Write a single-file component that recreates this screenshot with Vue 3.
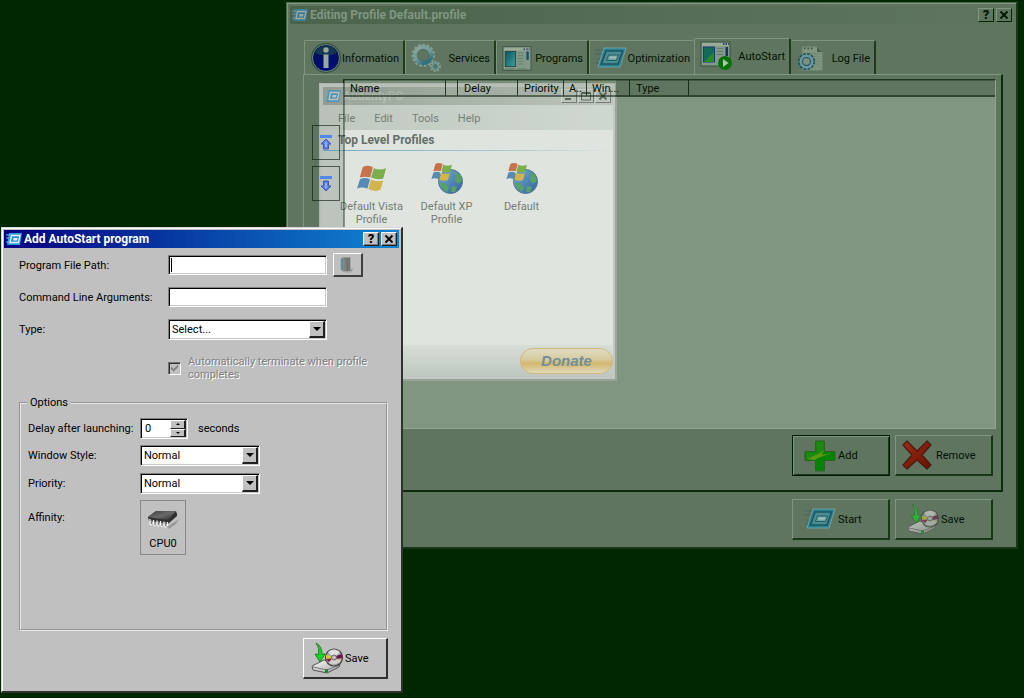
<script setup>
import { ref } from 'vue'

const tabs = [
  { name: 'Information', icon: 'info', cls: 'w-info' },
  { name: 'Services', icon: 'gears', cls: 'w-services' },
  { name: 'Programs', icon: 'program', cls: 'w-programs' },
  { name: 'Optimization', icon: 'speed', cls: 'w-optim' },
  { name: 'AutoStart', icon: 'autostart', cls: 'w-auto' },
  { name: 'Log File', icon: 'log', cls: 'w-log' },
]
const activeTab = ref('AutoStart')

const columns = [
  { title: 'Name', cls: 'c-name' },
  { title: '', cls: 'c-blank' },
  { title: 'Delay', cls: 'c-delay' },
  { title: 'Priority', cls: 'c-priority' },
  { title: 'A..', cls: 'c-aff' },
  { title: 'Win...', cls: 'c-win' },
  { title: 'Type', cls: 'c-type' },
  { title: '', cls: 'c-rest' },
]

const profiles = [
  { name: 'Default Vista Profile', icon: 'flag' },
  { name: 'Default XP Profile', icon: 'globe' },
  { name: 'Default', icon: 'globe' },
]

const path = ref('')
const args = ref('')
const type = ref('Select...')
const delay = ref(0)
const windowStyle = ref('Normal')
const priority = ref('Normal')
</script>

<template>
  <main class="desktop">
    <svg class="defs" aria-hidden="true">
      <defs>
        <linearGradient id="gTeal" x1="0" y1="0" x2="1" y2="1">
          <stop offset="0" stop-color="#0a5560" /><stop offset="1" stop-color="#3fa09a" />
        </linearGradient>
        <radialGradient id="gInfo" cx=".5" cy=".8" r=".8">
          <stop offset="0" stop-color="#000b80" /><stop offset="1" stop-color="#02104f" />
        </radialGradient>
        <linearGradient id="gGear" x1="0" y1="0" x2=".6" y2="1">
          <stop offset="0" stop-color="#8ba59a" /><stop offset=".6" stop-color="#6f9a98" /><stop offset="1" stop-color="#2f7080" />
        </linearGradient>
        <linearGradient id="gRed" x1="0" y1="0" x2="1" y2="1">
          <stop offset="0" stop-color="#a02c18" /><stop offset="1" stop-color="#651000" />
        </linearGradient>
        <linearGradient id="gDrive" x1="0" y1="0" x2="1" y2="1">
          <stop offset="0" stop-color="#ffffff" /><stop offset="1" stop-color="#9a9a9a" />
        </linearGradient>
        <linearGradient id="gGlobe" x1="0" y1="0" x2="1" y2="1">
          <stop offset="0" stop-color="#70b8f0" /><stop offset="1" stop-color="#1850a8" />
        </linearGradient>
        <linearGradient id="gChip" x1="0" y1="0" x2="1" y2="1">
          <stop offset="0" stop-color="#3c3c3c" /><stop offset=".5" stop-color="#6a6a6a" /><stop offset="1" stop-color="#2a2a2a" />
        </linearGradient>
      </defs>

      <symbol id="logo" viewBox="0 0 16 12">
        <path d="M3 0H16L14 12H1Z" fill="#2d9be0" />
        <path d="M0 2H4M0 5H3M0 9H3" stroke="#7cc8f4" stroke-width="1" />
        <path d="M5.500 2.500H14L12.500 9.500H4Z" fill="#2b8fd6" stroke="#e8f6ff" stroke-width="1.300" />
        <path d="M7.500 5H11.500L11 7.500H7Z" fill="#d8efff" />
      </symbol>

      <symbol id="info" viewBox="0 0 32 32">
        <circle cx="16" cy="16" r="15" fill="#35533c" />
        <circle cx="16" cy="16" r="13.500" fill="url(#gInfo)" stroke="#6b8a78" stroke-width="1" />
        <path d="M5 11A12 12 0 0 1 27 11Q16 16 5 11Z" fill="#24524f" opacity=".6" />
        <circle cx="16" cy="8" r="2.700" fill="#9aaa9a" />
        <path d="M13.500 12.500H18.500V26H13.500Z" fill="#9aaa9a" />
      </symbol>

      <symbol id="gears" viewBox="0 0 32 32">
        <circle cx="13" cy="13" r="11" fill="none" stroke="#7f9f96" stroke-width="3" stroke-dasharray="2.800 1.800" />
        <circle cx="13" cy="13" r="8.500" fill="none" stroke="url(#gGear)" stroke-width="4.500" />
        <circle cx="13" cy="13" r="6.200" fill="none" stroke="#3c6058" stroke-width=".7" />
        <circle cx="26" cy="25" r="4.800" fill="none" stroke="#87a49a" stroke-width="2" stroke-dasharray="2 1.500" />
        <circle cx="26" cy="25" r="3.200" fill="none" stroke="#6f9490" stroke-width="2.500" />
        <circle cx="26" cy="25" r="2" fill="none" stroke="#3c6058" stroke-width=".6" />
      </symbol>

      <symbol id="program" viewBox="0 0 32 32">
        <rect x="1" y="4" width="30" height="25" fill="#83998a" stroke="#39533f" />
        <rect x="2" y="5" width="28" height="3" fill="#98aa98" />
        <path d="M23 6.500h1.500M26 6.500h1.500M28.500 6.500h1" stroke="#14205a" stroke-width="1.500" />
        <rect x="3.500" y="9" width="11" height="16" fill="url(#gTeal)" stroke="#25493f" />
        <path d="M17 10.500h6M17 13.500h6M17 16.500h6M17 19.500h6M17 22.500h6M4 27.500h9M17 27.500h9" stroke="#667d6a" />
        <rect x="26" y="9" width="2.500" height="9" fill="#124e70" />
      </symbol>

      <symbol id="autostart" viewBox="0 0 32 32">
        <rect x="1" y="2" width="29" height="24" fill="#83998a" stroke="#39533f" />
        <rect x="2" y="3" width="27" height="3" fill="#98aa98" />
        <path d="M23 4h1.500M25.500 4h1.500M28 4h1" stroke="#14205a" stroke-width="1.500" />
        <rect x="3.500" y="7" width="11" height="15" fill="#146a58" stroke="#1c3c70" />
        <path d="M4 22L14 12V22Z" fill="#2a8a28" />
        <path d="M17 8.500h6M17 11.500h6M17 14.500h6" stroke="#667d6a" />
        <rect x="25.500" y="7" width="2.500" height="9" fill="#16306a" />
        <circle cx="25" cy="23" r="7" fill="#087008" />
        <path d="M23 19L28.500 23L23 27Z" fill="#b0c8a8" />
      </symbol>

      <symbol id="speed" viewBox="0 0 32 24">
        <path d="M1 4H9M0 8H8M2 13H7M1 17H6" stroke="#3f6668" stroke-width="1.200" />
        <path d="M9 2H31L25 21H3Z" fill="#2a8090" stroke="#6fa2a0" stroke-width="1" />
        <path d="M11 5H27.500L23 18H6.500Z" fill="#4b8c90" stroke="#1b5664" stroke-width="1.600" />
        <path d="M13.500 9H23.500L21.500 14.500H11.500Z" fill="#6fa09c" stroke="#1f5f6c" />
        <path d="M15 10.500H21.500L21 12.500H14.500Z" fill="#a5bfb4" />
      </symbol>

      <symbol id="log" viewBox="0 0 32 32">
        <path d="M7 3H24L30 9V30H7Z" fill="#809680" stroke="#70866f" />
        <path d="M24 3L30 9H24Z" fill="#486048" />
        <path d="M9 5h2M13 5h2M17 5h2" stroke="#405a44" stroke-width="2" />
        <path d="M10 11H28M10 14H28M10 17H28M10 20H28M10 23H28M10 26H28" stroke="#6d866f" />
        <circle cx="12" cy="20" r="8.500" fill="none" stroke="#1c505a" stroke-width="2.500" stroke-dasharray="3 1.500" />
        <circle cx="12" cy="20" r="6.500" fill="none" stroke="#6898a0" stroke-width="3" />
        <circle cx="12" cy="20" r="4.500" fill="none" stroke="#204868" stroke-width="1.200" />
      </symbol>

      <symbol id="plus" viewBox="0 0 32 32">
        <path d="M11.500 1H20.500V11.500H31V20.500H20.500V31H11.500V20.500H1V11.500H11.500Z" fill="#078407" stroke="#2a6420" />
        <path d="M2 12.500H12.500V2H19.500V11L15 17L2 19.500Z" fill="#2a9018" opacity=".55" />
        <path d="M3 19L16 13L20 10L18 15L28 13L14 18L11 20Z" fill="#5b9a10" />
      </symbol>

      <symbol id="cross" viewBox="0 0 32 32">
        <path d="M6 2L16 12L26 2L30 6L21 16L30 26L26 30L16 21L6 30L2 26L11 16L2 6Z" fill="url(#gRed)" stroke="#471c10" stroke-width="1.200" stroke-linejoin="round" />
      </symbol>

      <symbol id="drive" viewBox="0 0 32 32">
        <path d="M1 24L13 18L29 22L28 25L16 31L2 28Z" fill="url(#gDrive)" stroke="#555" />
        <path d="M2 25L16 28L28 23" fill="none" stroke="#777" />
        <path d="M14 28L17 27V30L14 31Z" fill="#0a8a20" />
        <ellipse cx="23" cy="15.500" rx="8.500" ry="8.500" fill="#a8a8a8" stroke="#444" stroke-width="1.200" />
        <path d="M17 10Q23 5 29 10L25 14H21Z" fill="#e0e0e0" />
        <path d="M15 13L21 14.500V17L15 16.500Z" fill="#d8c828" />
        <path d="M15 17L21 16.500L18 20Z" fill="#901040" />
        <path d="M25 14L31 12V16L25 17Z" fill="#701048" />
        <path d="M25 17L30 18L28 21Z" fill="#e8d090" />
        <path d="M18 21Q23 24 29 20L25 17H21Z" fill="#d0d0d0" />
        <circle cx="23" cy="15.500" r="2.500" fill="#c0c0c0" stroke="#666" />
        <path d="M5 1Q11 4 11 12L14 12L9 20L4 12L7.500 12.500Q9 6 5 1Z" fill="#10d820" stroke="#187018" stroke-width=".8" />
      </symbol>

      <symbol id="flagmark" viewBox="0 0 32 30">
        <path d="M6 3Q11 0 17 3L14 14Q8 12 3 14Z" fill="#e0663a" />
        <path d="M18 4Q24 7 31 4L28 15Q22 17 15 14Z" fill="#78b83a" />
        <path d="M3 16Q8 13 14 16L11 26Q5 23 0 26Z" fill="#4a88c8" />
        <path d="M15 16Q21 19 28 17L25 27Q18 30 12 26Z" fill="#ecc038" />
      </symbol>
      <symbol id="flag" viewBox="0 0 32 32">
        <use href="#flagmark" x="1" y="2" width="30" height="29" />
      </symbol>
      <symbol id="globe" viewBox="0 0 32 32">
        <circle cx="19.500" cy="19.500" r="12" fill="url(#gGlobe)" stroke="#456a9a" />
        <path d="M23 9L29 13L31 19L27 22L24 18L25 14ZM9 20L15 22L18 26L16 30L11 26ZM21 24L26 25L24 30L20 30Z" fill="#48a858" />
        <use href="#flagmark" x="0" y="0" width="22" height="20" />
      </symbol>

      <symbol id="chip" viewBox="0 0 32 20">
        <path d="M20 17L32 9L29 14L22 19Z" fill="#999" />
        <path d="M1 7L9 1H29L30 4V6L21 14L2 11Z" fill="#303030" />
        <path d="M1 7L9 1H29L21 10Z" fill="url(#gChip)" />
        <path d="M3 9v5l2 1M6.500 10v4l2 2M10 10.500v4l2 2M13.500 11v4l2 2M17 11.500v4l2 2M20.500 12v4" fill="none" stroke="#f0f0f0" stroke-width="1.300" />
        <path d="M4.500 10v4M8 11v4M11.500 11v4M15 12v4M18.500 12v4" stroke="#777" stroke-width="1" />
      </symbol>

      <symbol id="book" viewBox="0 0 16 16">
        <path d="M9 13L15 11L12 16H5Z" fill="#a4a4a4" />
        <path d="M1 1L4 0V15L1 13Z" fill="#5a8f94" stroke="#8a9aa8" stroke-width=".6" />
        <path d="M4 0H11V14L4 15Z" fill="#707070" />
        <path d="M5 1H6V14H5ZM9 1V13" fill="#939393" stroke="#858585" stroke-width=".6" />
      </symbol>

      <symbol id="up" viewBox="0 0 14 16">
        <path d="M1 1.500H13" stroke="#4080f0" stroke-width="3" />
        <path d="M7 4L12 9H9.500V14H4.500V9H2Z" fill="#4c6ee8" stroke="#2a48c0" />
        <path d="M7 6L9 8.500H8V12H6V8.500H5Z" fill="#86acf8" />
      </symbol>
      <symbol id="down" viewBox="0 0 14 16">
        <path d="M1 1.500H13" stroke="#4080f0" stroke-width="3" />
        <path d="M7 15L12 10H9.500V5H4.500V10H2Z" fill="#4c6ee8" stroke="#2a48c0" />
        <path d="M7 13L9 10.500H8V7H6V10.500H5Z" fill="#86acf8" />
      </symbol>

      <symbol id="close" viewBox="0 0 12 10">
        <path d="M2.500 1.500L9.500 8.500M9.500 1.500L2.500 8.500" stroke="currentColor" stroke-width="1.800" />
      </symbol>
      <symbol id="min" viewBox="0 0 12 10"><path d="M2 8H8" stroke="currentColor" stroke-width="2" /></symbol>
      <symbol id="max" viewBox="0 0 12 10"><path d="M1.500 1.500H10.500V9H1.500ZM1.500 2.500H10.500" fill="none" stroke="currentColor" /></symbol>
    </svg>

    <!-- Profile editor -->
    <section class="editor">
      <header class="titlebar">
        <svg class="logo"><use href="#logo" /></svg>
        <h1>Editing Profile Default.profile</h1>
        <button class="cap" aria-label="Help">?</button>
        <button class="cap" aria-label="Close"><svg><use href="#close" /></svg></button>
      </header>
      <nav class="tabs" role="tablist">
        <button
          v-for="t in tabs" :key="t.name" role="tab"
          :class="['tab', t.cls, { active: t.name === activeTab }]"
          :aria-selected="t.name === activeTab" @click="activeTab = t.name"
        >
          <svg><use :href="'#' + t.icon" /></svg><span>{{ t.name }}</span>
        </button>
      </nav>
      <div class="page">
        <div class="listrow">
          <div class="movers">
            <button aria-label="Move up"><svg><use href="#up" /></svg></button>
            <button aria-label="Move down"><svg><use href="#down" /></svg></button>
          </div>
          <div class="list">
            <table>
              <thead>
                <tr><th v-for="c in columns" :key="c.cls" :class="c.cls">{{ c.title }}</th></tr>
              </thead>
            </table>
          </div>
        </div>
        <div class="actions">
          <button class="big default"><svg class="ic"><use href="#plus" /></svg>Add</button>
          <button class="big remove"><svg class="ic"><use href="#cross" /></svg>Remove</button>
        </div>
      </div>
      <footer class="actions foot">
        <button class="big"><svg class="ic"><use href="#speed" /></svg>Start</button>
        <button class="big"><svg class="ic dim"><use href="#drive" /></svg>Save</button>
      </footer>
    </section>

    <!-- Main window, fading out -->
    <section class="ghost">
      <header class="titlebar">
        <svg class="logo"><use href="#logo" /></svg>
        <h1>AudentyPC</h1>
        <button class="cap" aria-label="Minimize"><svg><use href="#min" /></svg></button>
        <button class="cap" aria-label="Maximize"><svg><use href="#max" /></svg></button>
        <button class="cap" aria-label="Close main window"><svg><use href="#close" /></svg></button>
      </header>
      <nav class="menu">
        <button>File</button><button>Edit</button><button>Tools</button><button>Help</button>
      </nav>
      <div class="sheet">
        <h2>Top Level Profiles</h2>
        <ul>
          <li v-for="p in profiles" :key="p.name">
            <svg><use :href="'#' + p.icon" /></svg><span>{{ p.name }}</span>
          </li>
        </ul>
      </div>
      <footer><button class="donate">Donate</button></footer>
    </section>

    <!-- Add program dialog -->
    <section class="dialog" role="dialog" aria-labelledby="dlg-title">
      <header class="titlebar">
        <svg class="logo"><use href="#logo" /></svg>
        <h1 id="dlg-title">Add AutoStart program</h1>
        <button class="cap" aria-label="Dialog help">?</button>
        <button class="cap" aria-label="Close dialog"><svg><use href="#close" /></svg></button>
      </header>
      <form @submit.prevent>
        <div class="field">
          <label for="path">Program File Path:</label>
          <span class="caretbox"><input id="path" v-model="path" class="box" type="text"><i class="caret"></i></span>
          <button type="button" class="browse" aria-label="Browse"><svg><use href="#book" /></svg></button>
        </div>
        <div class="field">
          <label for="args">Command Line Arguments:</label>
          <input id="args" v-model="args" class="box" type="text">
        </div>
        <div class="field">
          <label for="type">Type:</label>
          <span class="combo wide">
            <select id="type" v-model="type"><option>Select...</option></select><i class="arrow"></i>
          </span>
        </div>
        <div class="check">
          <input id="term" type="checkbox" checked disabled>
          <label for="term">Automatically terminate when profile completes</label>
        </div>
        <fieldset>
          <legend>Options</legend>
          <div class="opt">
            <label for="delay">Delay after launching:</label>
            <span class="spin">
              <input id="delay" v-model.number="delay" type="text">
              <span class="steps">
                <button type="button" aria-label="Increase" @click="delay++"><i class="tri-up"></i></button>
                <button type="button" aria-label="Decrease" @click="delay--"><i class="tri-down"></i></button>
              </span>
            </span>
            <span class="unit">seconds</span>
          </div>
          <div class="opt">
            <label for="wstyle">Window Style:</label>
            <span class="combo"><select id="wstyle" v-model="windowStyle"><option>Normal</option></select><i class="arrow"></i></span>
          </div>
          <div class="opt">
            <label for="prio">Priority:</label>
            <span class="combo"><select id="prio" v-model="priority"><option>Normal</option></select><i class="arrow"></i></span>
          </div>
          <div class="opt affinity">
            <span id="aff" class="lbl">Affinity:</span>
            <button type="button" class="cpu" aria-describedby="aff"><svg><use href="#chip" /></svg>CPU0</button>
          </div>
        </fieldset>
        <div class="save">
          <button type="submit" class="big light"><svg class="ic"><use href="#drive" /></svg>Save</button>
        </div>
      </form>
    </section>
  </main>
</template>

<style>
body { background: #002800; }
</style>

<style scoped>
* { box-sizing: border-box; }
.desktop {
  position: relative;
  min-height: 100vh;
  overflow: hidden;
  background: #002800;
  font: 11px/13px Roboto, "Liberation Sans", Arial, sans-serif;
  color: #000;
}
.defs { position: absolute; width: 0; height: 0; }
button, input, select { font: inherit; color: inherit; margin: 0; padding: 0; border-radius: 0; outline: 0; }
h1, h2, ul { margin: 0; padding: 0; }
svg { display: block; flex: none; }

.titlebar { display: flex; align-items: center; height: 18px; padding: 0 2px; }
.titlebar h1 { flex: 1; margin-left: 2px; font-size: 12px; line-height: 18px; font-weight: bold; white-space: nowrap; }
.logo { width: 16px; height: 12px; }
.cap {
  width: 16px; height: 14px; border: 1px solid; margin-left: 2px;
  display: flex; align-items: center; justify-content: center;
  font-size: 13px; line-height: 12px; font-weight: 900;
}
.cap svg { width: 12px; height: 10px; }

/* editor */
.editor {
  position: absolute; left: 286px; right: 6px; top: 2px;
  background: #607560; color: #001200;
  border: 1px solid #506850; border-right: 2px solid #183818; border-bottom: 2px solid #183818;
  box-shadow: inset 1px 1px #809880;
  padding: 3px 2px 7px 3px;
}
.editor .titlebar { background: linear-gradient(90deg, #4b634b, #5f755f); color: #809680; }
.editor .logo { opacity: .5; }
.cap { background: #607560; border-color: #809880 #002800 #002800 #809880; color: #001800; }
.tabs { display: flex; align-items: flex-end; height: 36px; margin: 14px 0 0 14px; }
.tab {
  display: flex; align-items: center; justify-content: space-between;
  height: 34px; padding: 1px 4px 0 5px; background: #607560;
  border: 1px solid #7e967e; border-right: 2px solid #1c3c1c; border-bottom: 0;
  border-radius: 2px 2px 0 0; white-space: nowrap;
}
.tab svg { width: 32px; height: 32px; }
.tab.active { height: 36px; position: relative; padding-bottom: 2px; }
.w-info { width: 101px; }
.w-services { width: 91px; }
.w-programs { width: 93px; }
.w-optim { width: 105px; border-right-width: 0; }
.w-auto { width: 97px; }
.w-log { width: 85px; border-left: 0; }
.w-services svg, .w-programs svg { width: 30px; height: 30px; }
.w-log svg { width: 28px; height: 28px; }
.page {
  margin: 0 11px 0 13px; padding: 4px 5px 14px 8px;
  border: 1px solid #7e967e; border-right: 2px solid #0c2c0c; border-bottom: 2px solid #0c2c0c;
}
.listrow { display: flex; gap: 3px; }
.movers { width: 28px; padding-top: 46px; display: flex; flex-direction: column; gap: 6px; position: relative; z-index: 2; }
.movers button {
  height: 35px; border: 1px solid rgba(0, 20, 0, .6); background: transparent;
  display: flex; align-items: center; justify-content: center;
}
.movers svg { width: 14px; height: 16px; opacity: .85; }
.list {
  position: relative; flex: 1; height: 350px; background: #809680;
  border: 1px solid #1c381c; border-right-color: #90a490; border-bottom-color: #90a490;
}
/* frame edge stays visible through the fading window */
.list::before {
  content: ""; position: absolute; left: -1px; top: 0; bottom: 0; width: 2px;
  background: rgba(0, 24, 0, .4); z-index: 2;
}
.list table { width: 100%; table-layout: fixed; border-collapse: separate; border-spacing: 0; }
.list thead { position: relative; z-index: 2; }
.list tr { background: linear-gradient(90deg, rgba(0, 24, 0, .06) 272px, #607560 272px); }
.list th {
  height: 17px; padding: 3px 0 0 6px; font-weight: normal; text-align: left; line-height: 12px;
  border-right: 1px solid rgba(0, 20, 0, .75); border-bottom: 2px solid rgba(0, 24, 0, .5);
  box-shadow: inset 0 1px rgba(0, 24, 0, .3); white-space: nowrap; overflow: hidden;
}
.c-name { width: 102px; }
.c-blank { width: 12px; }
.c-delay { width: 60px; }
.c-priority { width: 46px; }
.c-aff { width: 23px; }
.list th.c-aff, .list th.c-win { padding-left: 5px; }
.c-win { width: 43px; }
.c-type { width: 59px; }
.list th.c-rest { border-right: 0; }
.actions { display: flex; justify-content: flex-end; gap: 6px; margin: 6px 3px 0 0; }
.foot { margin: 7px 21px 0 0; }
.big {
  display: flex; align-items: center; width: 98px; height: 41px; padding-left: 11px; gap: 2px;
  background: #607560; color: #001200;
  border: 1px solid #7e967e; border-right: 2px solid #183818; border-bottom: 2px solid #183818;
}
.actions .big + .big { margin-left: -1px; }
.ic { width: 32px; height: 32px; }
.ic.dim { opacity: .6; }
.default { border: 1px solid #001c00; box-shadow: inset 1px 1px #7e967e, inset -1px -1px #183818; }
.remove { padding-left: 5px; gap: 3px; }

/* main window */
.ghost {
  position: absolute; left: 319px; top: 83px; width: 298px; z-index: 1; opacity: .75;
  background: #d8dad8; border: 1px solid #c8cac8; border-right: 2px solid #a4aaa4; border-bottom: 2px solid #a0a6a0;
  padding: 3px 2px 2px 3px; color: #707672;
}
.ghost .titlebar { background: linear-gradient(90deg, #a4aaa4, #d0d4d0); color: #c8ccc8; }
.ghost .cap { background: #d0d4d0; border-color: #eee #777 #777 #eee; color: #505850; margin-left: 1px; }
.ghost .logo { opacity: .7; }
.menu { display: flex; gap: 19px; height: 25px; padding: 2px 0 0 15px; align-items: center; background: linear-gradient(90deg, #d6dad6, #eaeeea); }
.menu button { border: 0; background: none; }
.sheet { min-height: 215px; background: linear-gradient(90deg, #dcdedc 20px, #fff 20px); }
.sheet h2 {
  font-size: 12px; line-height: 19px; padding: 1px 0 1px 15px; color: #5c625e;
  background: linear-gradient(90deg, #6ab0dc, #c4e0f0 70%, #fff) bottom / 100% 1px no-repeat;
}
.sheet ul { display: flex; list-style: none; padding: 11px 0 0 11px; }
.sheet li { width: 75px; display: flex; flex-direction: column; align-items: center; gap: 6px; text-align: center; }
.sheet li svg { width: 32px; height: 32px; }
.sheet li span { width: 64px; }
.ghost footer { height: 32px; display: flex; justify-content: flex-end; align-items: center; background: linear-gradient(#f4f6f4, #d4d8d4); }
.donate {
  width: 93px; height: 26px; border: 1px solid #f0c080; border-radius: 13px;
  background: linear-gradient(#fff4d8, #f4dca8 45%, #f0c468 60%, #fff0d0);
  font: italic bold 15px/18px "Liberation Sans", Arial, sans-serif; color: #6c8da0;
}

/* dialog */
.dialog {
  position: absolute; left: 1px; top: 227px; width: 402px; z-index: 3; background: #c0c0c0;
  border: 1px solid #d8d8d8; border-right: 2px solid #303030; border-bottom: 2px solid #303030;
  box-shadow: inset 1px 1px #fff; padding: 2px 2px 12px 2px;
}
.dialog .titlebar { background: linear-gradient(90deg, #000080, #1084d0); color: #fff; }
.dialog .cap { background: #c0c0c0; color: #000; border-color: #fff #202020 #202020 #fff; box-shadow: inset -1px -1px #808080; }
.dialog form { padding: 1px 11px 0 15px; }
.field { display: flex; align-items: center; height: 32px; }
.field label { width: 149px; }
.box, .combo, .spin {
  background: #fff; border: 1px solid #808080; border-right-color: #fff; border-bottom-color: #fff;
  box-shadow: inset 1px 1px #000, inset -1px -1px #c8c8c8;
}
.box { width: 159px; height: 20px; padding: 0 4px; }
.caretbox { position: relative; display: flex; }
.caret { position: absolute; left: 3px; top: 3px; width: 1px; height: 14px; background: #000; }
.browse {
  width: 30px; height: 24px; margin-left: 6px; background: #c0c0c0;
  border: 1px solid #fff; border-right: 2px solid #404040; border-bottom: 2px solid #404040;
  display: flex; align-items: center; justify-content: center;
}
.browse svg { width: 15px; height: 16px; }
.combo { position: relative; display: flex; width: 120px; height: 21px; }
.combo.wide { width: 159px; }
.combo select { appearance: none; border: 0; background: none; width: 100%; padding-left: 3px; }
.arrow {
  position: absolute; right: 1px; top: 1px; width: 16px; height: 17px; pointer-events: none; background: #c0c0c0;
  border: 1px solid #fff; border-right: 2px solid #202020; border-bottom: 2px solid #202020;
  display: flex; align-items: center; justify-content: center;
}
.arrow::after { content: ""; border: 4px solid transparent; border-top-color: #000; border-bottom: 0; }
.check { display: flex; align-items: center; height: 26px; margin: 10px 0 0 149px; gap: 7px; }
.check input {
  appearance: none; flex: none; width: 13px; height: 13px; background: #c0c0c0;
  border: 1px solid #707070; border-right-color: #fff; border-bottom-color: #fff;
  box-shadow: inset 1px 1px #303030;
}
.check input::after {
  content: ""; display: block; width: 7px; height: 7px; margin: 2px; background: #808080;
  clip-path: polygon(0 30%, 38% 64%, 100% 0, 100% 40%, 38% 100%, 0 68%);
}
.check label { width: 180px; color: #808080; text-shadow: 1px 1px #fff; }
fieldset { margin: 15px 0 0; padding: 6px 6px 0 7px; min-height: 235px; border: 2px groove #e8e8e8; }
legend { margin-left: -1px; padding: 0 3px; }
.opt { display: flex; align-items: center; height: 27px; }
.opt + .opt + .opt { height: 29px; }
.opt label, .lbl { width: 112px; }
.spin { display: flex; width: 48px; height: 21px; padding: 1px; }
.spin input { width: 28px; min-width: 0; border: 0; background: none; padding-left: 3px; }
.steps { flex: 1; display: flex; flex-direction: column; }
.steps button {
  flex: 1; min-height: 0; background: #c0c0c0; border: 1px solid #fff;
  border-right: 2px solid #202020; border-bottom-color: #202020;
  display: flex; align-items: center; justify-content: center;
}
.tri-up { border: 2px solid transparent; border-bottom-color: #000; border-top: 0; }
.tri-down { border: 2px solid transparent; border-top-color: #000; border-bottom: 0; }
.unit { margin-left: 10px; }
.opt + .opt + .opt.affinity { height: 55px; margin-top: 2px; align-items: flex-start; }
.lbl { padding-top: 11px; }
.cpu {
  width: 46px; height: 55px; border: 1px solid #888; background: #c0c0c0;
  display: flex; flex-direction: column; align-items: center; justify-content: flex-end; gap: 7px; padding-bottom: 4px;
}
.cpu svg { width: 32px; height: 20px; }
.save { display: flex; justify-content: flex-end; margin-top: 7px; }
.light {
  width: 85px; padding-left: 7px; background: #c0c0c0; color: #000;
  border-color: #fff #303030 #303030 #fff;
}
</style>
